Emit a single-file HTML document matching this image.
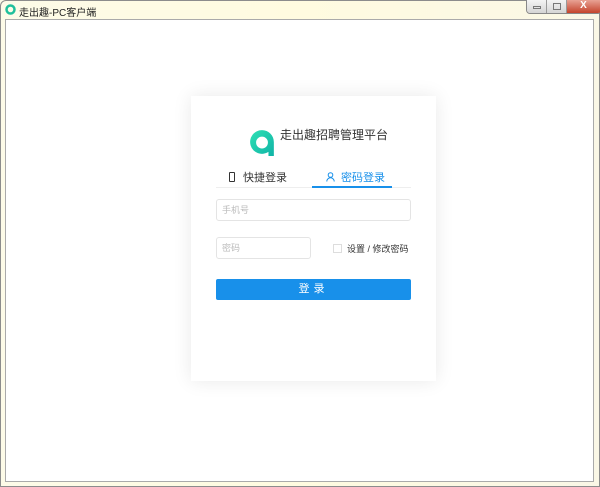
<!DOCTYPE html>
<html><head><meta charset="utf-8"><style>
*{margin:0;padding:0;box-sizing:border-box}
body{width:600px;height:487px;overflow:hidden;background:#fbf8e6;font-family:"Liberation Sans","Noto Sans CJK SC",sans-serif;position:relative}
.frame{position:absolute;left:0;top:0;width:600px;height:487px;border:1px solid #8c8c8c;border-radius:6px 6px 0 0;background:linear-gradient(90deg,#fdfbe8,#fffbe0 50%,#faf7e6)}
.title{position:absolute;left:19px;top:4px;font-size:10px;color:#222}
.client{position:absolute;left:5px;top:19px;width:589px;height:463px;background:#fff;border:1px solid #aaa}
.btns{position:absolute;left:526px;top:0;height:14px;display:flex;border:1px solid #888;border-top:none;border-radius:0 0 4px 4px;overflow:hidden}
.b{width:20px;height:13px;background:linear-gradient(#f3f3f3,#d5d5d5);border-right:1px solid #999;position:relative}
.x{width:34px;background:linear-gradient(#e8a294,#c4432c);color:#fff;font-size:10px;text-align:center;line-height:12px;font-weight:bold}
.card{position:absolute;left:191px;top:96px;width:245px;height:285px;background:#fff;box-shadow:0 0 18px rgba(0,0,0,.09)}
.logo{position:absolute;left:58px;top:32px}
.h{position:absolute;left:89px;top:30px;font-size:12px;color:#333}
.tab{position:absolute;top:73px;font-size:11px;color:#333}
.line{position:absolute;left:25px;top:91px;width:195px;height:1px;background:#eee}
.act{position:absolute;left:121px;top:90px;width:80px;height:2px;background:#1890ea}
.in{position:absolute;border:1px solid #e4e4e4;border-radius:3px;font-size:9px;color:#bbb;padding-left:5px}
.btn{position:absolute;left:25px;top:183px;width:195px;height:21px;background:#1890ea;border-radius:2px;color:#fff;font-size:11px;text-align:center;line-height:21px;letter-spacing:4px}
</style></head><body>
<div class="frame"></div>
<svg style="position:absolute;left:5px;top:4px" width="11" height="11" viewBox="0 0 11 11"><circle cx="5.5" cy="5.5" r="4" fill="none" stroke="#1fbf9c" stroke-width="2.5"/></svg>
<div class="title">走出趣-PC客户端</div>
<div class="btns"><div class="b"><div style="position:absolute;left:6px;top:6px;width:8px;height:3px;border:1px solid #777"></div></div><div class="b"><div style="position:absolute;left:6px;top:3px;width:8px;height:7px;border:1px solid #777"></div></div><div class="b x">X</div></div>
<div class="client">
</div>
<div class="card">
<svg class="logo" width="26" height="28" viewBox="0 0 24 26"><defs><linearGradient id="g" x1="0" y1="0" x2="1" y2="1"><stop offset="0" stop-color="#2ee0b4"/><stop offset="1" stop-color="#10b3a6"/></linearGradient></defs><path d="M12 2a11 11 0 1 0 6 20.2V26h5V13A11 11 0 0 0 12 2zm0 6a5.5 5.5 0 1 1 0 11a5.5 5.5 0 0 1 0-11z" fill="url(#g)"/></svg>
<div class="h">走出趣招聘管理平台</div>
<div class="tab" style="left:38px"><span style="display:inline-block;width:6px;height:10px;border:1.5px solid #333;border-radius:1px;vertical-align:-1px;margin-right:8px"></span>快捷登录</div>
<div class="tab" style="left:135px;color:#1890ea"><svg width="9" height="10" viewBox="0 0 9 10" style="vertical-align:-1px;margin-right:6px"><circle cx="4.5" cy="3" r="2.3" fill="none" stroke="#1890ea" stroke-width="1"/><path d="M0.8 9.5a3.7 3.7 0 0 1 7.4 0" fill="none" stroke="#1890ea" stroke-width="1"/></svg>密码登录</div>
<div class="line"></div><div class="act"></div>
<div class="in" style="left:25px;top:103px;width:195px;height:22px;line-height:20px">手机号</div>
<div class="in" style="left:25px;top:141px;width:95px;height:22px;line-height:20px">密码</div>
<div style="position:absolute;left:142px;top:148px;width:9px;height:9px;border:1px solid #ddd"></div>
<div style="position:absolute;left:156px;top:146px;font-size:9px;color:#333">设置 / 修改密码</div>
<div class="btn">登录</div>
</div>
</body></html>
